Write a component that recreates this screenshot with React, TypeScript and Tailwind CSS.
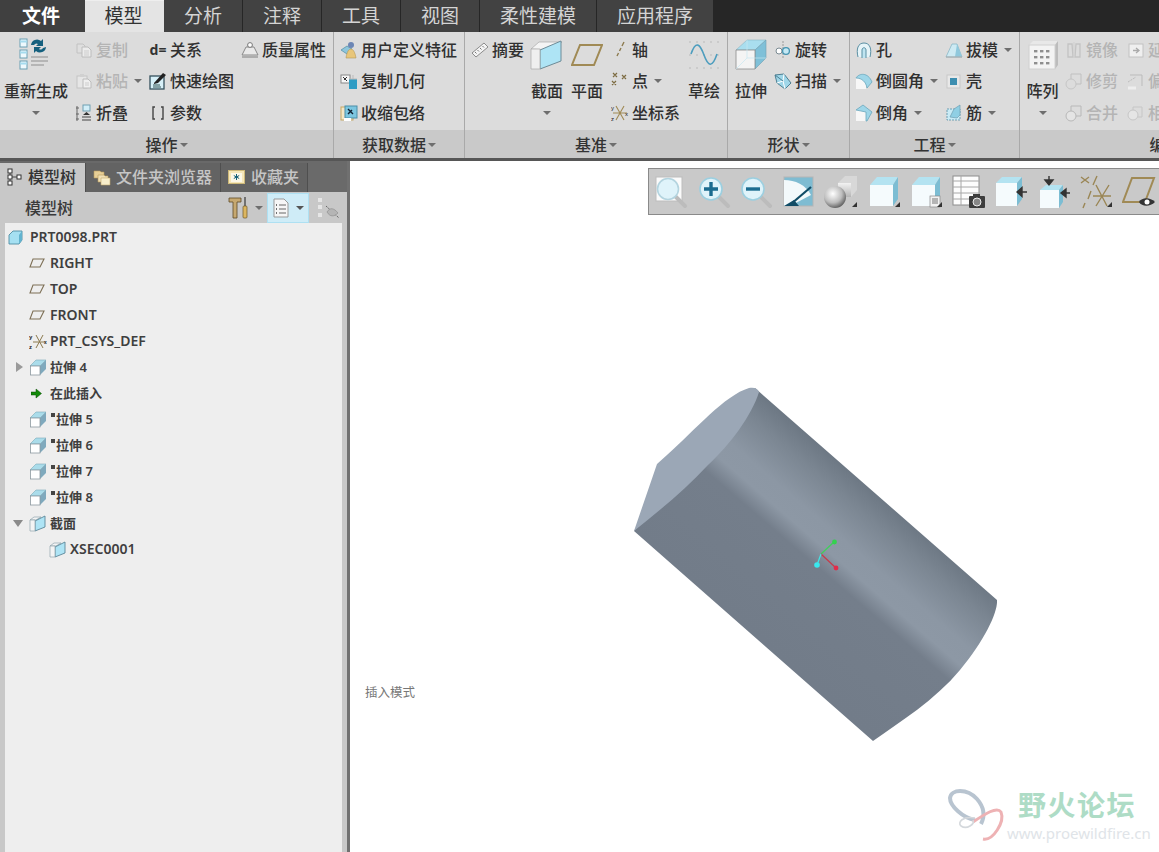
import React from "react";

const FONT = { fontFamily: '"Noto Sans","Noto Sans CJK SC",sans-serif' };

const Ico = ({ s = 18, children, vb = 18 }: { s?: number; children: React.ReactNode; vb?: number }) => (
  <svg width={s} height={s} viewBox={`0 0 ${vb} ${vb}`} className="shrink-0 block">{children}</svg>
);

const Caret = ({ c = "#6e6e6e" }: { c?: string }) => (
  <svg width="8" height="4" viewBox="0 0 8 4" className="block shrink-0"><path d="M0 0H8L4 4Z" fill={c} /></svg>
);

/* big cubes */
const SectionBig = () => (
  <svg width="34" height="32" viewBox="0 0 34 32" className="block">
    <path d="M1 10 9 3H32L24 11Z" fill="#f4f4f4" stroke="#aaa" strokeWidth=".7" />
    <path d="M10 11 31 2V22L10 30Z" fill="#aee4f5" stroke="#6d8b97" />
    <path d="M1 10H10V30H1Z" fill="#efefef" stroke="#aaa" strokeWidth=".7" />
  </svg>
);
const PlaneBig = () => (
  <svg width="32" height="24" viewBox="0 0 32 24" className="block">
    <path d="M9 2H31L23 22H1Z" fill="none" stroke="#a08a55" strokeWidth="2" />
  </svg>
);
const SketchBig = () => (
  <svg width="30" height="28" viewBox="0 0 30 28" className="block">
    <g fill="#999">
      {[1, 8, 15, 22, 29].map((x) => [1, 14, 27].map((y) => <rect key={x + "-" + y} x={x - 0.5} y={y - 0.5} width="1" height="1" />))}
    </g>
    <path d="M2 13C7 -1 11 3 15 14S23 28 28 13" fill="none" stroke="#4d9dbe" strokeWidth="1.6" />
  </svg>
);
const ExtrudeBig = () => (
  <svg width="32" height="32" viewBox="0 0 32 32" className="block">
    <path d="M1 11 12 1H31L20 11Z" fill="#a9deef" stroke="#8cb6c4" strokeWidth=".6" />
    <path d="M20 11 31 1V19L20 30Z" fill="#7fc0d8" stroke="#6fa0b2" strokeWidth=".6" />
    <path d="M1 11H20V30H1Z" fill="#f4f4f4" stroke="#8b8b8b" strokeWidth=".8" />
    <path d="M12 1V19H31M12 19 1 30" fill="none" stroke="#c7e6f0" strokeWidth=".7" />
  </svg>
);
const PatternBig = () => (
  <svg width="32" height="32" viewBox="0 0 32 32" className="block">
    <path d="M2 6 6 2H31L28 6Z" fill="#e8e8e8" />
    <path d="M28 6 31 2V26L28 30Z" fill="#bcbcbc" />
    <rect x="2" y="6" width="26" height="24" fill="#f3f3f3" stroke="#d0d0d0" />
    <g fill="#8e8e8e">
      {[7, 13, 19].map((x) => [11, 17, 23].map((y) => <rect key={x + "_" + y} x={x} y={y} width="3.4" height="2.4" />))}
    </g>
  </svg>
);

/* small icons */
const Regen = () => (
  <svg width="34" height="34" viewBox="0 0 34 34" className="block">
    {[1, 12, 23].map((y) => (
      <g key={y}>
        <rect x="1" y={y} width="7" height="8" fill="#eef9fd" stroke="#6a9fb3" />
        <path d={`M1 ${y + 2.5}h7`} stroke="#a5dbee" strokeWidth="2" />
      </g>
    ))}
    <path d="M12 7a6 6 0 0 1 10-4l2-2v7h-7l2-2a3 3 0 0 0-4 1Z" fill="#15607e" />
    <path d="M27 9a6 6 0 0 1-10 4l-2 2V9h7l-2 2a3 3 0 0 0 4-1Z" fill="#15607e" />
    <path d="M12 19H29M12 23H29M12 27H25" stroke="#a8a8a8" strokeWidth="1.6" />
  </svg>
);
const Copy = () => (
  <Ico>
    <path d="M2 3H8L10 5V12H2Z" fill="#dfdfdf" stroke="#c2c2c2" />
    <path d="M7 6H13L16 9V16H7Z" fill="#ececec" stroke="#bcbcbc" />
    <path d="M9 10h5M9 12h5M9 14h5" stroke="#cdcdcd" />
  </Ico>
);
const Paste = () => (
  <Ico>
    <rect x="2" y="4" width="10" height="12" fill="#e6e6e6" stroke="#c4c4c4" />
    <rect x="5" y="2" width="4" height="3" fill="#d0d0d0" />
    <path d="M8 7H13L16 10V16H8Z" fill="#efefef" stroke="#bcbcbc" />
    <path d="M10 11h4M10 13h4" stroke="#cdcdcd" />
  </Ico>
);
const Fold = () => (
  <Ico>
    <path d="M2 2V17" stroke="#666" />
    <path d="M1 4h3M1 10h3M1 15h3" stroke="#666" />
    <rect x="8" y="1" width="7" height="6" fill="#d2eef8" stroke="#6f9fb2" />
    <path d="M11.5 8 15 11H8Z" fill="#333" />
    <path d="M7 13H16M7 16H16" stroke="#444" />
  </Ico>
);
const Quick = () => (
  <Ico>
    <rect x="1" y="4" width="14" height="13" fill="#d7f0f8" stroke="#35505c" strokeWidth="1.3" />
    <path d="M4 13H11M4 15H12" stroke="#355" />
    <path d="M5 11 14 1l3 2-8 8-4 1Z" fill="#222" />
  </Ico>
);
const Brackets = () => (
  <svg width="14" height="14" viewBox="0 0 14 14" className="block shrink-0">
    <path d="M4 1H2V13H4M10 1H12V13H10" fill="none" stroke="#444" strokeWidth="1.4" />
  </svg>
);
const Mass = () => (
  <Ico>
    <path d="M1 16H17" stroke="#999" strokeWidth="1.4" />
    <path d="M1 14 5 6H13L17 14Z" fill="#e9e9e9" stroke="#888" />
    <circle cx="9" cy="4" r="2.4" fill="#fff" stroke="#777" />
  </Ico>
);
const Udf = () => (
  <Ico>
    <path d="M1 9 7 5 12 8 7 13Z" fill="#8ec6dc" stroke="#4f8ca3" strokeWidth=".7" />
    <circle cx="11" cy="4" r="3" fill="#6c86b5" />
    <path d="M6 17C7 10 9 8 11 8s4 3 5 9Z" fill="#e8c67a" stroke="#b39757" strokeWidth=".6" />
  </Ico>
);
const CopyGeom = () => (
  <Ico>
    <rect x="1" y="3" width="9" height="8" fill="#f6f6f6" stroke="#888" />
    <path d="M3 5 7 9M4 8l3-3" stroke="#333" />
    <rect x="9" y="7" width="8" height="10" fill="#2f9cc4" />
    <path d="M9 7H17M13 3V7" stroke="#bbb" />
  </Ico>
);
const Shrink = () => (
  <Ico>
    <rect x="1" y="3" width="12" height="13" fill="#f4e6c6" stroke="#c6a765" />
    <rect x="5" y="2" width="12" height="12" fill="#7cc6e0" stroke="#4a8ea8" />
    <path d="M8 5l5 5M8 10l4-4" stroke="#123" strokeWidth="1.4" />
    <path d="M4 14H11V17H4Z" fill="#fff" />
  </Ico>
);
const Ruler = () => (
  <Ico>
    <path d="M1 12 13 2l4 4L5 16Z" fill="#f4f4f4" stroke="#8b8b8b" />
    <path d="M4 11l1.5 1.5M6.5 9 8 10.5M9 7l1.5 1.5M11.5 5 13 6.5" stroke="#777" />
  </Ico>
);
const Axis = () => (
  <Ico><path d="M13 1 11 5M10 7 8.5 10M7.5 12 6 15" stroke="#8c7a4e" strokeWidth="1.4" /></Ico>
);
const Point = () => (
  <Ico>
    <g stroke="#7d6c42" strokeWidth="1.2"><path d="M2 1l4 4M6 1 2 5M11 3l4 4M15 3l-4 4M1 9l4 4M5 9l-4 4" /></g>
  </Ico>
);
const Csys = () => (
  <Ico>
    <path d="M5 2 13 16M13 2 5 16M2 9H16" stroke="#a08a55" strokeWidth="1.1" />
    <text x="0" y="6" fontSize="6" fill="#222" fontFamily="Liberation Sans">y</text>
    <text x="0" y="17" fontSize="6" fill="#222" fontFamily="Liberation Sans">z</text>
    <text x="14" y="12" fontSize="6" fill="#222" fontFamily="Liberation Sans">x</text>
  </Ico>
);
const Revolve = () => (
  <Ico>
    <path d="M9 0V18" stroke="#9a9a9a" strokeDasharray="2 1" />
    <circle cx="5" cy="10" r="3" fill="#fff" stroke="#7a8a92" />
    <circle cx="12" cy="10" r="3.4" fill="#c4e8f4" stroke="#4593b0" strokeWidth="1.3" />
  </Ico>
);
const Sweep = () => (
  <Ico>
    <path d="M1 3 10 2 17 11 11 17 3 11Z" fill="#9fd6e8" stroke="#4d7f92" />
    <path d="M3 11 9 9 11 17M10 2 9 9" fill="none" stroke="#fff" />
    <path d="M1 3 9 9" stroke="#4d7f92" />
  </Ico>
);
const Hole = () => (
  <Ico>
    <path d="M3 16C1 8 3 2 9 2s8 6 6 14" fill="#e6f4f8" stroke="#5a8fa3" />
    <path d="M7 17V9c0-3 4-3 4 0v8" fill="#bfe4f0" stroke="#5a8fa3" />
  </Ico>
);
const Round = ({ corner = false }: { corner?: boolean }) => (
  <Ico>
    <path d="M1 6H11V17H1Z" fill="#f7f7f7" />
    <path d={corner ? "M1 6 8 1 17 8 12 17H11V8Z" : "M1 6C4 1 13 0 17 10L12 16C11 10 7 6 1 6Z"} fill="#9fd6e8" stroke="#6ba7bc" strokeWidth=".8" />
  </Ico>
);
const Draft = () => (
  <Ico>
    <path d="M1 16 7 3H12L17 16Z" fill="#cdeaf3" stroke="#7fb1c3" strokeWidth=".7" />
    <path d="M12 3 10 16H17Z" fill="#8fc8dc" />
    <path d="M1 16H17" stroke="#aaa" />
  </Ico>
);
const Shell = () => (
  <Ico>
    <rect x="2" y="3" width="13" height="13" fill="#e8e8e8" stroke="#c8c8c8" />
    <rect x="5" y="6" width="7" height="7" fill="#3d8eb0" />
  </Ico>
);
const Rib = () => (
  <Ico>
    <path d="M2 5H15V16H2Z" fill="#c9ebf6" stroke="#6f9fb2" strokeDasharray="2 1" />
    <path d="M9 5 15 1V11L12 14 5 13Z" fill="#8fcfe4" stroke="#6f9fb2" strokeWidth=".7" />
  </Ico>
);
const Mirror = () => (
  <Ico>
    <path d="M7 3H3V16H8ZM11 3H15V16H10Z" fill="none" stroke="#c3c3c3" strokeWidth="1.3" />
    <path d="M9 1V17" stroke="#cfcfcf" />
  </Ico>
);
const Extend = () => (
  <Ico>
    <rect x="2" y="3" width="14" height="13" fill="#efefef" stroke="#c2c2c2" />
    <path d="M6 9.5h5M9 7l3 2.5L9 12" fill="none" stroke="#aaa" strokeWidth="1.3" />
  </Ico>
);
const Trim = () => (
  <Ico>
    <circle cx="6" cy="12" r="5" fill="none" stroke="#c6c6c6" />
    <path d="M6 7V2H16V12H11" fill="none" stroke="#c0c0c0" />
  </Ico>
);
const Merge = () => (
  <Ico>
    <circle cx="6" cy="12" r="5" fill="#e4e4e4" stroke="#b8b8b8" />
    <path d="M6 7V2H16V12H11" fill="none" stroke="#b8b8b8" />
  </Ico>
);
const Offset = () => (
  <Ico>
    <path d="M3 3H15V14" fill="none" stroke="#bbb" />
    <path d="M1 10 9 5" stroke="#bbb" strokeDasharray="2 1" />
    <path d="M1 16H9" stroke="#eee" strokeWidth="3" />
  </Ico>
);
const Intersect = () => (
  <Ico>
    <circle cx="6" cy="11" r="5" fill="#e5e5e5" stroke="#c6c6c6" />
    <path d="M6 6V3H15V13H11" fill="none" stroke="#c6c6c6" />
  </Ico>
);

/* toolbar icons */
const Bar = ({ children }: { children: React.ReactNode }) => (
  <svg width="34" height="34" viewBox="0 0 34 34" className="block shrink-0">{children}</svg>
);
const Tick = () => <path d="M28 32 33 32 33 27Z" fill="#333" />;
const Lens = ({ sym }: { sym?: "+" | "-" }) => (
  <>
    {!sym && <rect x="2" y="2" width="26" height="24" fill="#fbfbfb" stroke="#bdbdbd" />}
    <path d="M21 21 31 31" stroke="#bcbcbc" strokeWidth="4" strokeLinecap="round" />
    <circle cx="14" cy="14" r={sym ? 11 : 10.5} fill="#dff3fa" stroke={sym ? "#9ccfe0" : "#b4d4df"} strokeWidth="1.6" />
    {sym && <path d={sym === "+" ? "M7 14H21M14 7V21" : "M7 14H21"} stroke="#1b6c90" strokeWidth="3.4" />}
  </>
);
const Repaint = () => (
  <Bar>
    <rect x="2" y="2" width="29" height="29" fill="#7fbcd2" stroke="#b5b5b5" />
    <path d="M2 5C13 5 24 10 29 20L8 31H2Z" fill="#f3f9fb" />
    <path d="M9 29 29 12" stroke="#114c66" strokeWidth="2.2" />
    <path d="M2 31 12 25 17 31Z" fill="#114c66" />
  </Bar>
);
const Shade = () => (
  <Bar>
    <path d="M14 8 21 1H33V15L27 22H14Z" fill="#d8d8d8" />
    <path d="M14 8H27V22H14Z" fill="url(#bx)" />
    <circle cx="11" cy="22" r="11" fill="url(#sp)" />
    <Tick />
  </Bar>
);
const CubeBar = ({ page }: { page?: boolean }) => (
  <Bar>
    <path d="M3 10 10 2H31L26 10Z" fill="#b4e3f1" />
    <path d="M26 10 31 2V24L26 31Z" fill="#7cbdd3" />
    <rect x="3" y="10" width="23" height="21" fill="#f5fbfd" />
    {page ? (
      <g>
        <rect x="21" y="21" width="10" height="11" fill="#f2f2f2" stroke="#888" strokeWidth=".7" />
        <path d="M23 24h6M23 26h6M23 28h6" stroke="#777" />
      </g>
    ) : null}
    <Tick />
  </Bar>
);
const TableCam = () => (
  <Bar>
    <rect x="1" y="1" width="26" height="29" fill="#fdfdfd" stroke="#8d8d8d" />
    <path d="M1 6H27M1 12H27M1 18H27M1 24H27M9 1V30" stroke="#a8a8a8" />
    <rect x="17" y="21" width="16" height="12" rx="1" fill="#3d3d3d" />
    <rect x="21" y="19" width="7" height="3" fill="#3d3d3d" />
    <circle cx="25" cy="27" r="4" fill="#888" stroke="#eee" />
  </Bar>
);
const Orient = () => (
  <Bar>
    <path d="M2 8 8 2H28L23 8Z" fill="#b4e3f1" />
    <path d="M23 8 28 2V24L23 31Z" fill="#7cbdd3" />
    <rect x="2" y="8" width="21" height="23" fill="#f5fbfd" />
    <path d="M33 17H24M28 12.5 23 17 28 21.5Z" stroke="#333" strokeWidth="1.4" fill="#333" />
  </Bar>
);
const Orient2 = () => (
  <Bar>
    <path d="M3 15 9 10H26L22 15Z" fill="#b4e3f1" />
    <path d="M22 15 26 10V27L22 33Z" fill="#7cbdd3" />
    <rect x="3" y="15" width="19" height="18" fill="#f5fbfd" />
    <path d="M12 1V6M8 5 12 10 16 5Z" stroke="#333" strokeWidth="1.4" fill="#333" />
    <path d="M33 18H28M29 14 24 18 29 22Z" stroke="#333" strokeWidth="1.4" fill="#333" />
  </Bar>
);
const DatumDisp = () => (
  <Bar>
    <g stroke="#9a8655" strokeWidth="1.4" fill="none">
      <path d="M2 2 10 8M10 2 2 8M18 1 14 10M12 16 9 24M6 28 4 33" />
      <path d="M17 10 28 31M30 10 17 31M14 21H32" />
    </g>
    <Tick />
  </Bar>
);
const PlaneEye = () => (
  <Bar>
    <path d="M10 3H32L23 27H1Z" fill="none" stroke="#a08a55" strokeWidth="2" />
    <path d="M17 27C20 22 28 22 33 27 28 32 20 32 17 27Z" fill="#333" />
    <circle cx="25" cy="27" r="2.5" fill="#fff" />
  </Bar>
);

/* tree icons */
const TPlane = () => (
  <svg width="16" height="10" viewBox="0 0 16 10" className="block"><path d="M4 1H15L11 9H1Z" fill="none" stroke="#7d6f55" strokeWidth="1.1" /></svg>
);
const TCsys = () => (
  <Ico><path d="M7 3 14 16M14 3 7 16M4 10H16" stroke="#8c7a4e" /><text x="0" y="7" fontSize="6" fill="#222" fontFamily="Liberation Sans">y</text><text x="0" y="17" fontSize="6" fill="#222" fontFamily="Liberation Sans">z</text><text x="15" y="12" fontSize="5" fill="#222" fontFamily="Liberation Sans">x</text></Ico>
);
const TExtrude = () => (
  <Ico>
    <path d="M1 8 7 2H17L11 8Z" fill="#aadcea" stroke="#7aa9b8" strokeWidth=".6" />
    <path d="M11 8 17 2V11L11 17Z" fill="#7fa9bd" />
    <rect x="1.5" y="8" width="9.5" height="9" fill="#fff" stroke="#8d9aa0" strokeWidth=".8" />
  </Ico>
);
const TSec = () => (
  <Ico>
    <path d="M1 6 5 3H12L7 6Z" fill="#f4f4f4" stroke="#8fa4ac" strokeWidth=".7" />
    <path d="M6 7 16 2V13L6 17Z" fill="#aee4f5" stroke="#5b8798" strokeWidth=".9" />
    <path d="M1 6H6V17H1Z" fill="#f4f4f4" stroke="#8fa4ac" strokeWidth=".7" />
  </Ico>
);
const TPart = () => (
  <svg width="15" height="15" viewBox="0 0 15 15" className="block">
    <path d="M1 5 5 1H14V10L11 14H1Z" fill="#a5e0f2" stroke="#4e8ca3" strokeWidth=".9" />
    <path d="M11 5V14L14 10V1Z" fill="#62b3cf" />
  </svg>
);
const Arrow = () => (
  <svg width="11" height="11" viewBox="0 0 11 11" className="block"><path d="M0 4H5V1L10.5 5.5 5 10V7H0Z" fill="#138a09" stroke="#0a4a05" strokeWidth=".5" /></svg>
);

/* ribbon helpers */
type It = { icon?: React.ReactNode; t?: string; caret?: boolean; off?: boolean };
const Row = ({ icon, t, caret, off }: It) => (
  <div className={`flex items-center h-[31.5px] gap-[2px] whitespace-nowrap ${off ? "text-[#b4b4b4]" : "text-[#303030]"}`}>
    <span className="w-[18px] shrink-0 flex justify-center">{icon}</span>
    <span className="ml-[1px]">{t}</span>
    {caret && <span className="ml-[4px]"><Caret /></span>}
  </div>
);
const Col = ({ w, items }: { w: string; items: It[] }) => (
  <div className={`flex flex-col shrink-0 ${w}`}>
    {items.map((it, i) => <Row key={i} {...it} />)}
  </div>
);
const Big = ({ icon, t, caret, w }: { icon: React.ReactNode; t: string; caret?: boolean; w: string }) => (
  <div className={`flex flex-col items-center shrink-0 ${w}`}>
    <div className="h-[42px] flex items-center justify-center">{icon}</div>
    <div className="h-[24px] mt-[3px] leading-[24px] whitespace-nowrap text-[#303030]">{t}</div>
    {caret && <div className="mt-[8px]"><Caret /></div>}
  </div>
);
const Group = ({ w, label, children, caret = true }: { w: string; label: string; children: React.ReactNode; caret?: boolean }) => (
  <div className={`flex flex-col shrink-0 border-r border-[#a9a9a9] ${w}`}>
    <div className="h-[98px] bg-[#dcdcdc] flex pt-[2px]">{children}</div>
    <div className="h-[28px] pt-[2px] bg-[#c9c9c9] flex items-center justify-center gap-[2px] text-[#333] font-medium">
      <span>{label}</span>{caret && <Caret />}
    </div>
  </div>
);

const topTabs = [
  { t: "分析", w: "w-[79px]" },
  { t: "注释", w: "w-[79px]" },
  { t: "工具", w: "w-[79px]" },
  { t: "视图", w: "w-[79px]" },
  { t: "柔性建模", w: "w-[117px]" },
  { t: "应用程序", w: "w-[117px]" },
];

const Tree = ({ depth = 0, icon, t, exp, mark, latin }: { depth?: number; icon: React.ReactNode; t: string; exp?: "r" | "d"; mark?: boolean; latin?: boolean }) => (
  <div className="flex items-center h-[26px] whitespace-nowrap">
    <div className="shrink-0" style={{ width: depth }} />
    <div className="w-[21px] flex items-center justify-end pr-[3px] shrink-0">
      {exp === "r" && <svg width="7" height="10" viewBox="0 0 7 10" className="block"><path d="M0 0 7 5 0 10Z" fill="#9a9a9a" /></svg>}
      {exp === "d" && <svg width="10" height="7" viewBox="0 0 10 7" className="block"><path d="M0 0H10L5 7Z" fill="#8a8a8a" /></svg>}
    </div>
    <div className="w-[24px] pl-[3px] flex items-center shrink-0">{icon}</div>
    {mark && <div className="w-[4px] h-[4px] bg-[#444] self-start mt-[7px] ml-[1px] mr-[1px]" />}
    <span className={latin ? "text-[14px]" : ""}>{t}</span>
  </div>
);

export default function App() {
  return (
    <div className="w-[1159px] h-[852px] overflow-hidden bg-white flex flex-col text-[16px] leading-none" style={FONT}>
      <svg width="0" height="0" className="absolute">
        <defs>
          <linearGradient id="bx" x1="0" y1="0" x2="0" y2="1"><stop offset="0" stopColor="#f2f2f2" /><stop offset="1" stopColor="#b5b5b5" /></linearGradient>
          <radialGradient id="sp" cx=".4" cy=".35" r=".75"><stop offset="0" stopColor="#fff" /><stop offset=".55" stopColor="#bdbdbd" /><stop offset="1" stopColor="#444" /></radialGradient>
        </defs>
      </svg>

      {/* title tabs */}
      <div className="h-[32px] shrink-0 flex bg-[#262626] text-[19px]">
        <div className="w-[85px] pr-[3px] bg-[#404040] flex items-center justify-center text-white font-bold">文件</div>
        <div className="w-[79px] pr-[2px] bg-[#e4e4e4] flex items-center justify-center text-[#333] border-t border-[#eee]">模型</div>
        {topTabs.map((x) => (
          <div key={x.t} className={`${x.w} bg-[#424242] border-r border-[#262626] flex items-center justify-center text-[#d4d4d4]`}>{x.t}</div>
        ))}
      </div>

      {/* ribbon */}
      <div className="h-[126px] shrink-0 flex font-medium overflow-hidden">
        <Group w="w-[334px]" label="操作">
          <Big w="w-[72px]" icon={<Regen />} t="重新生成" caret />
          <Col w="w-[74px] ml-[3px]" items={[
            { icon: <Copy />, t: "复制", off: true },
            { icon: <Paste />, t: "粘贴", off: true, caret: true },
            { icon: <Fold />, t: "折叠" },
          ]} />
          <Col w="w-[92px]" items={[
            { icon: <span className="text-[14px] font-bold text-[#333]">d=</span>, t: "关系" },
            { icon: <Quick />, t: "快速绘图" },
            { icon: <Brackets />, t: "参数" },
          ]} />
          <Col w="w-[90px]" items={[{ icon: <Mass />, t: "质量属性" }]} />
        </Group>
        <Group w="w-[131px]" label="获取数据">
          <Col w="w-[128px] ml-[6px]" items={[
            { icon: <Udf />, t: "用户定义特征" },
            { icon: <CopyGeom />, t: "复制几何" },
            { icon: <Shrink />, t: "收缩包络" },
          ]} />
        </Group>
        <Group w="w-[263px]" label="基准">
          <Col w="w-[56px] ml-[6px]" items={[{ icon: <Ruler />, t: "摘要" }]} />
          <Big w="w-[40px]" icon={<SectionBig />} t="截面" caret />
          <Big w="w-[40px]" icon={<PlaneBig />} t="平面" />
          <Col w="w-[74px] ml-[4px]" items={[
            { icon: <Axis />, t: "轴" },
            { icon: <Point />, t: "点", caret: true },
            { icon: <Csys />, t: "坐标系" },
          ]} />
          <Big w="w-[38px]" icon={<SketchBig />} t="草绘" />
        </Group>
        <Group w="w-[122px]" label="形状">
          <Big w="w-[46px]" icon={<ExtrudeBig />} t="拉伸" />
          <Col w="w-[74px]" items={[
            { icon: <Revolve />, t: "旋转" },
            { icon: <Sweep />, t: "扫描", caret: true },
          ]} />
        </Group>
        <Group w="w-[170px]" label="工程">
          <Col w="w-[90px] ml-[5px]" items={[
            { icon: <Hole />, t: "孔" },
            { icon: <Round />, t: "倒圆角", caret: true },
            { icon: <Round corner />, t: "倒角", caret: true },
          ]} />
          <Col w="w-[72px]" items={[
            { icon: <Draft />, t: "拔模", caret: true },
            { icon: <Shell />, t: "壳" },
            { icon: <Rib />, t: "筋", caret: true },
          ]} />
        </Group>
        <Group w="w-[292px]" label="编辑" caret={false}>
          <Big w="w-[45px]" icon={<PatternBig />} t="阵列" caret />
          <Col w="w-[62px]" items={[
            { icon: <Mirror />, t: "镜像", off: true },
            { icon: <Trim />, t: "修剪", off: true },
            { icon: <Merge />, t: "合并", off: true },
          ]} />
          <Col w="w-[60px]" items={[
            { icon: <Extend />, t: "延伸", off: true },
            { icon: <Offset />, t: "偏移", off: true },
            { icon: <Intersect />, t: "相交", off: true },
          ]} />
        </Group>
      </div>
      <div className="h-[3px] shrink-0 bg-[#565656]" />

      {/* body */}
      <div className="flex-1 flex min-h-0">
        {/* left panel */}
        <div className="w-[350px] shrink-0 flex h-full">
          <div className="w-[347px] flex flex-col">
            <div className="h-[31px] shrink-0 flex bg-[#696969] text-[16px] font-medium">
              <div className="w-[85px] bg-[#c8c8c8] flex items-center text-[#333] pl-[7px] pb-[2px] gap-[6px] mt-[2px]">
                <svg width="15" height="18" viewBox="0 0 15 18" className="block">
                  <g fill="#fff" stroke="#333"><rect x="1" y="1" width="4" height="4" /><rect x="1" y="7" width="4" height="4" /><rect x="1" y="13" width="4" height="4" /><rect x="10" y="7" width="4" height="4" /></g>
                  <path d="M3 5v2M3 11v2M5 9h5" stroke="#444" />
                </svg>
                <span>模型树</span>
              </div>
              <div className="w-[135px] bg-[#636363] border-l border-[#4f4f4f] flex items-center text-[#c6c6c6] pl-[7px] pb-[2px] gap-[5px] mt-[2px]">
                <svg width="18" height="18" viewBox="0 0 18 18" className="block">
                  <path d="M1 3H7L8 4H11V10H1Z" fill="#e7cf97" stroke="#b89b5a" strokeWidth=".6" />
                  <path d="M5 7H11L12 8H15V14H5Z" fill="#f0dfb4" stroke="#b89b5a" strokeWidth=".6" />
                  <path d="M8 10H17V17H8Z" fill="#f8eecb" stroke="#c4a96d" strokeWidth=".6" />
                </svg>
                <span>文件夹浏览器</span>
              </div>
              <div className="w-[88px] bg-[#636363] border-x border-[#4f4f4f] flex items-center text-[#c6c6c6] pl-[7px] pb-[2px] gap-[6px] mt-[2px]">
                <svg width="17" height="14" viewBox="0 0 17 14" className="block">
                  <rect x="0.5" y="0.5" width="16" height="13" fill="#f5e6b8" stroke="#cdb878" />
                  <rect x="3" y="3" width="11" height="9" fill="#fbf7e8" />
                  <path d="M8.5 4v6M5.8 5.5l5.4 3M11.2 5.5l-5.4 3" stroke="#135e78" />
                </svg>
                <span>收藏夹</span>
              </div>
              <div className="flex-1 bg-[#6a6a6a]" />
            </div>
            <div className="h-[31px] shrink-0 bg-[#c8c8c8] flex items-center text-[#3a3a3a] font-medium">
              <span className="ml-[25px] w-[203px]">模型树</span>
              <svg width="22" height="24" viewBox="0 0 22 24" className="block">
                <path d="M1 2H13V6H9V22H5V6H1Z" fill="#c6a870" stroke="#5e4a26" strokeWidth=".8" />
                <path d="M17 1V10" stroke="#555" strokeWidth="1.5" />
                <rect x="15" y="10" width="4" height="12" rx="1" fill="#dcb660" stroke="#6d5826" strokeWidth=".7" />
              </svg>
              <span className="ml-[5px]"><Caret /></span>
              <div className="ml-[4px] w-[42px] h-[30px] bg-[#cfecf7] border border-[#aee0f2] flex items-center justify-center gap-[7px]">
                <svg width="16" height="20" viewBox="0 0 16 20" className="block">
                  <path d="M1 1H11L15 5V19H1Z" fill="#f6f6f6" stroke="#999" />
                  <path d="M6 7H13M6 11H13M6 15H13" stroke="#666" />
                  <path d="M3 7h1M3 11h1M3 15h1" stroke="#444" strokeWidth="1.4" />
                </svg>
                <Caret c="#555" />
              </div>
              <svg width="24" height="22" viewBox="0 0 24 22" className="block ml-[8px]">
                <g fill="#e6e6e6"><rect x="1" y="1" width="4" height="4" /><rect x="1" y="8" width="4" height="4" /><rect x="1" y="16" width="4" height="4" /></g>
                <path d="M9 9 22 21" stroke="#666" strokeDasharray="2 1" />
                <path d="M10 15C13 10 17 11 21 16 17 20 13 20 10 15Z" fill="#b5b5b5" stroke="#888" strokeWidth=".6" />
              </svg>
            </div>
            <div className="flex-1 flex min-h-0 bg-[#c8c8c8]">
              <div className="w-[5px] shrink-0" />
              <div className="w-[337px] bg-[#eeeeee] pt-[1px] text-[13px] font-semibold text-[#3f3f3f]">
                <div className="flex items-center h-[26px] pl-[3px] gap-[7px]"><TPart /><span className="text-[14px]">PRT0098.PRT</span></div>
                <Tree icon={<TPlane />} t="RIGHT" latin />
                <Tree icon={<TPlane />} t="TOP" latin />
                <Tree icon={<TPlane />} t="FRONT" latin />
                <Tree icon={<TCsys />} t="PRT_CSYS_DEF" latin />
                <Tree icon={<TExtrude />} t="拉伸 4" exp="r" />
                <Tree icon={<span className="pl-[2px] block"><Arrow /></span>} t="在此插入" />
                <Tree icon={<TExtrude />} t="拉伸 5" mark />
                <Tree icon={<TExtrude />} t="拉伸 6" mark />
                <Tree icon={<TExtrude />} t="拉伸 7" mark />
                <Tree icon={<TExtrude />} t="拉伸 8" mark />
                <Tree icon={<TSec />} t="截面" exp="d" />
                <Tree depth={20} icon={<TSec />} t="XSEC0001" latin />
              </div>
            </div>
          </div>
          <div className="w-[3px] bg-[#707070]" />
        </div>

        {/* canvas */}
        <div className="flex-1 relative bg-white overflow-hidden">
          <div className="absolute left-[298px] top-[7px] w-[520px] h-[47px] bg-[#c9c9c9] border border-[#8a8a8a] flex items-center pl-[5px] gap-[8.5px]">
            <Bar><Lens /></Bar>
            <Bar><Lens sym="+" /></Bar>
            <Bar><Lens sym="-" /></Bar>
            <Repaint />
            <Shade />
            <CubeBar />
            <CubeBar page />
            <TableCam />
            <Orient />
            <Orient2 />
            <DatumDisp />
            <PlaneEye />
          </div>

          <div className="absolute left-[15px] top-[526px] text-[12.5px] text-[#777]">插入模式</div>

          {/* model */}
          <svg width="809" height="691" viewBox="350 161 809 691" className="absolute left-0 top-0 block">
            <defs>
              <linearGradient id="cyl" gradientUnits="userSpaceOnUse" x1="876" y1="494" x2="754" y2="636">
                <stop offset="0" stopColor="#6d7884" />
                <stop offset=".12" stopColor="#7b8692" />
                <stop offset=".3" stopColor="#8c97a4" />
                <stop offset=".4" stopColor="#8d98a5" />
                <stop offset=".5" stopColor="#747e8b" />
                <stop offset="1" stopColor="#727c89" />
              </linearGradient>
            </defs>
            <path d="M755 388 997 600C998 612 985 640 960 670 935 700 900 722 873 741L634 531 690 450Z" fill="url(#cyl)" />
            <path d="M634 531 657 464 667 455C695 430 725 395 749 388 755 387 758 389 759 392 752 415 730 445 708 465 685 490 660 510 634 531Z" fill="#9ba7b6" />
            <path d="M821 554 834 542" stroke="#3fd05a" strokeWidth="1.2" />
            <path d="M821 554 836 568" stroke="#c83a4a" strokeWidth="1.2" />
            <path d="M821 554 817 565" stroke="#42e6e6" strokeWidth="1.2" />
            <circle cx="834.5" cy="542" r="2.4" fill="#34d24e" />
            <circle cx="836" cy="568" r="2.4" fill="#e32c4a" />
            <circle cx="817" cy="565" r="2.8" fill="#38e8ee" />
          </svg>

          {/* watermark */}
          <svg width="70" height="64" viewBox="0 0 70 64" className="absolute left-[597px] top-[625px] block">
            <path d="M28 34C16 32 3 20 3 12 4 3 20 2 30 13 37 21 38 30 34 38" fill="none" stroke="#b8c4d0" strokeWidth="4" />
            <path d="M26 36C38 28 50 20 54 26 58 36 46 55 36 53" fill="none" stroke="#eeb2b4" strokeWidth="3" />
            <path d="M28 32C16 30 10 36 14 40 20 44 28 38 26 34" fill="none" stroke="#d4d8dc" strokeWidth="1.6" />
          </svg>
          <div className="absolute left-[668px] top-[630px] text-[28px] font-bold text-[#aedcc6] tracking-[1.5px] whitespace-nowrap">野火论坛</div>
          <div className="absolute left-[657px] top-[665px] text-[15px] text-[#e0e4e8] whitespace-nowrap">www.proewildfire.cn</div>
        </div>
      </div>
    </div>
  );
}
